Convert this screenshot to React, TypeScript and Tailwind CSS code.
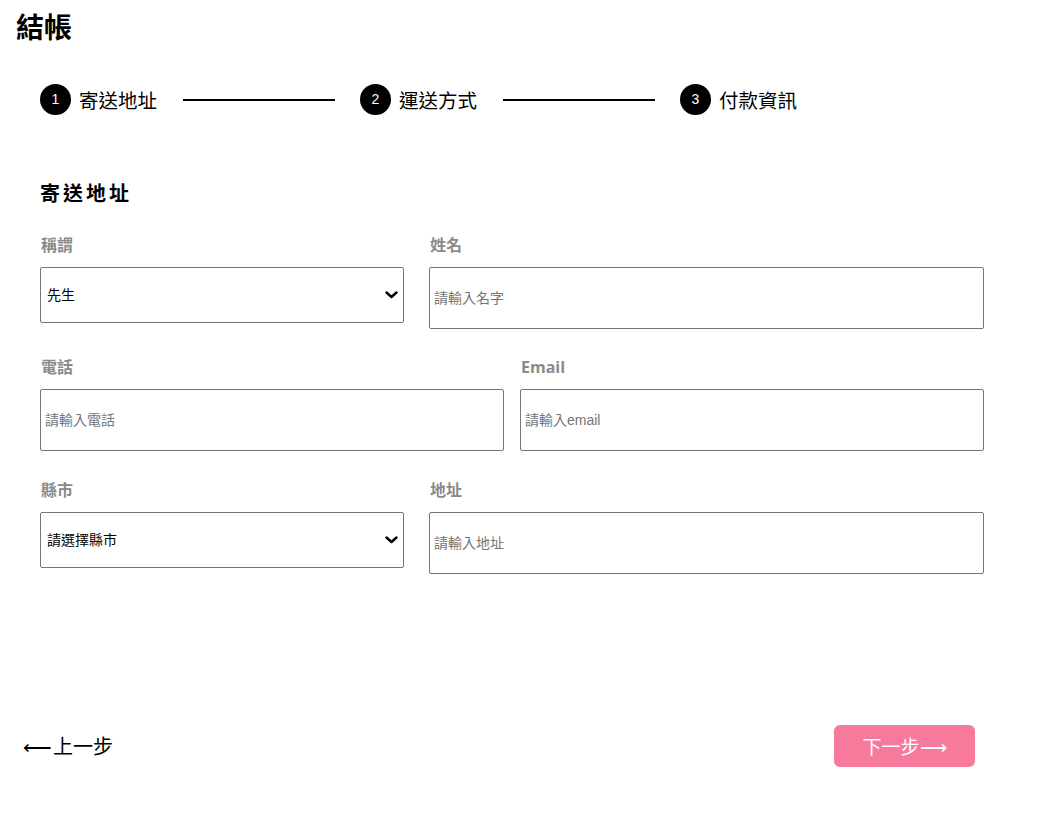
import React from "react";

const CJK = { fontFamily: '"Noto Sans CJK TC", "Noto Sans", sans-serif' };

function Chevron() {
  return (
    <svg width="13" height="8" viewBox="0 0 13 8" className="pointer-events-none absolute right-[6px] top-1/2 -translate-y-1/2">
      <path d="M1.5 1.5 L6.5 6 L11.5 1.5" fill="none" stroke="#000" strokeWidth="2.4" strokeLinecap="round" strokeLinejoin="round" />
    </svg>
  );
}

function Label({ children, className = "" }: { children: React.ReactNode; className?: string }) {
  return (
    <div
      className={"text-[16px] leading-[24px] font-bold text-[#8a8a8a] mb-[10px] pl-[1px] " + className}
      style={{ fontFamily: '"Open Sans", "Noto Sans CJK TC", sans-serif' }}
    >
      {children}
    </div>
  );
}

function TextInput({ placeholder }: { placeholder: string }) {
  return (
    <input
      placeholder={placeholder}
      className="block w-full h-[62px] border border-[#767676] rounded-[2px] pl-[4px] text-[14px] text-black placeholder:text-[#757575] outline-none"
      style={{ fontFamily: '"Liberation Sans", "Noto Sans CJK TC", sans-serif' }}
    />
  );
}

function Select({ value, options }: { value: string; options: string[] }) {
  return (
    <div className="relative w-full">
      <select
        defaultValue={value}
        className="appearance-none block w-full h-[56px] border border-[#767676] rounded-[2px] pl-[6px] text-[14px] text-black bg-white outline-none"
        style={{ fontFamily: '"Liberation Sans", "Noto Sans CJK TC", sans-serif' }}
      >
        {options.map((o) => (
          <option key={o}>{o}</option>
        ))}
      </select>
      <Chevron />
    </div>
  );
}

function Step({ n, label, line }: { n: number; label: string; line: boolean }) {
  return (
    <div className="flex items-center">
      <div
        className="w-[31px] h-[31px] rounded-full bg-black text-white flex items-center justify-center text-[14px]"
        style={{ fontFamily: '"Liberation Sans", sans-serif' }}
      >
        {n}
      </div>
      <div className="ml-[8px] text-[19.5px] leading-[31px] text-black w-[78px] whitespace-nowrap">{label}</div>
      {line && <div className="ml-[26px] mr-[25px] w-[152px] h-[2px] bg-black" />}
    </div>
  );
}

export default function App() {
  return (
    <div className="min-h-screen bg-white text-black" style={CJK}>
      <h1 className="pl-4 pt-[5px] text-[28px] leading-[42px] font-bold">結帳</h1>

      <div className="pl-[40px] mt-[37px] flex items-center">
        <Step n={1} label="寄送地址" line />
        <Step n={2} label="運送方式" line />
        <Step n={3} label="付款資訊" line={false} />
      </div>

      <div className="pl-[40px] w-[984px] mt-[63px]">
        <h2 className="text-[20px] leading-[30px] font-bold tracking-[3px]">寄送地址</h2>

        <div className="mt-[25px] flex items-start gap-[25px]">
          <div className="w-[364px] shrink-0">
            <Label>稱謂</Label>
            <Select value="先生" options={["先生", "小姐"]} />
          </div>
          <div className="flex-1">
            <Label>姓名</Label>
            <TextInput placeholder="請輸入名字" />
          </div>
        </div>

        <div className="mt-[26px] grid grid-cols-2 gap-[16px]">
          <div>
            <Label>電話</Label>
            <TextInput placeholder="請輸入電話" />
          </div>
          <div>
            <Label>Email</Label>
            <TextInput placeholder="請輸入email" />
          </div>
        </div>

        <div className="mt-[27px] flex items-start gap-[25px]">
          <div className="w-[364px] shrink-0">
            <Label>縣市</Label>
            <Select value="請選擇縣市" options={["請選擇縣市", "台北市", "新北市"]} />
          </div>
          <div className="flex-1">
            <Label>地址</Label>
            <TextInput placeholder="請輸入地址" />
          </div>
        </div>
      </div>

      <div className="mt-[151px] flex items-center justify-between pl-[23px] pr-[68px]">
        <button className="flex items-center text-[20px] leading-[42px] text-black">
          <span>⟵</span>
          <span className="ml-[1px]">上一步</span>
        </button>
        <button className="w-[141px] h-[42px] rounded-[6px] bg-[#f7799b] text-white text-[19px] flex items-center justify-center">
          <span>下一步</span>
          <span>⟶</span>
        </button>
      </div>
    </div>
  );
}
